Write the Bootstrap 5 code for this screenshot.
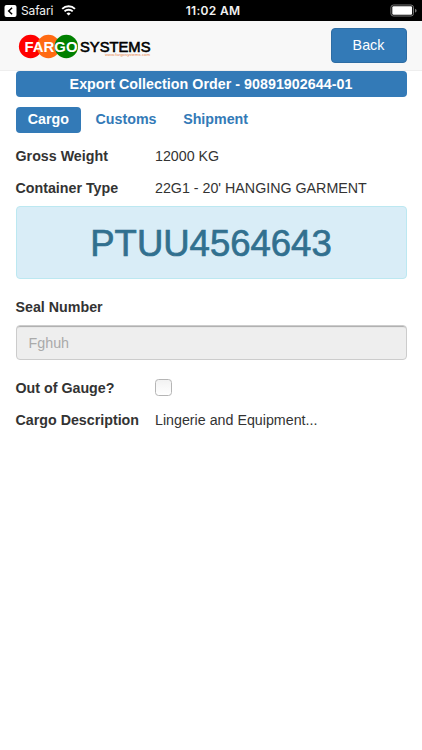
<!DOCTYPE html>
<html lang="en">
<head>
<meta charset="utf-8">
<meta name="viewport" content="width=device-width, initial-scale=1">
<title>Export Collection Order</title>
<link href="https://cdn.jsdelivr.net/npm/bootstrap@5.3.0/dist/css/bootstrap.min.css" rel="stylesheet">
<style>
:root{--brand:#337ab7}
body{font:14.25px/20px "Liberation Sans",Arial,sans-serif;color:#333;background:#fff}
.status-bar{height:21px;background:#000;color:#f2f2f2;font:12px/21px Inter,sans-serif}
.status-side{width:138px}
.status-time{font-weight:600;letter-spacing:.3px;padding-left:4px}
.top-nav{height:50px;background:#f8f8f8;padding:7px 15.5px 0 18px;border-bottom:1px solid #eee}
.btn-brand{width:76px;height:35px;padding:0;font-size:14.3px;color:#fff;background:var(--brand);border:1px solid #2e6da4;border-radius:4px}
.page-body{padding:0 15.5px}
.order-title{height:26px;line-height:26px;background:var(--brand);color:#fff;border-radius:4px;letter-spacing:.04px}
.tab-row{margin-top:10px;height:26px;gap:2px}
.tab-row .nav-link{height:26px;line-height:25px;padding:0 12.3px;color:var(--brand);border-radius:4px;font-weight:700;font-size:14.25px}
.tab-row .nav-link.active{background:var(--brand);color:#fff}
.field-row{height:32px;line-height:32px}
.field-name{width:139.5px;font-weight:700;white-space:nowrap}
.first-field{margin-top:7px}
.container-no{height:73px;margin:2px 0 0;padding:0;border:1px solid #bce8f1;border-radius:4px;background:#d9edf7;color:#31708f;font-size:36.5px;line-height:73px;-webkit-text-stroke:.7px #31708f}
.seal-label{margin:18px 0 8px;line-height:20px;font-weight:700}
.seal-input,.seal-input:disabled{height:35px;padding:0 12px;border:1px solid #ccc;border-radius:4px;background:#eee;color:#aaa;font-size:14.3px;box-shadow:inset 0 2px 1px -1px #aaa;opacity:1}
.gauge-row{margin-top:12px}
.gauge-box{display:block;width:17px;height:17px;margin:-2px 0 0;border:1px solid #b5b5b5;border-radius:4.5px;background:linear-gradient(#f2f2f2,#fff)}
.gauge-box:checked{background:var(--brand)}
</style>
<script src="https://cdn.jsdelivr.net/npm/bootstrap@5.3.0/dist/js/bootstrap.bundle.min.js"></script>
</head>
<body>
<div class="status-bar d-flex justify-content-between align-items-center">
  <div class="status-side d-flex align-items-center">
    <svg width="76" height="21" viewBox="0 0 76 21">
      <rect x="4.5" y="5" width="12" height="12" rx="2" fill="#fff"/>
      <path d="M12.1 7.8 8.7 11l3.4 3.2" fill="none" stroke="#000" stroke-width="1.5"/>
      <text x="21" y="15.3" fill="#f2f2f2" font-size="12" textLength="32.5" font-family="Inter,sans-serif">Safari</text>
      <g fill="none" stroke="#fff" stroke-width="1.9"><path d="M62.2 8.9a9.2 9.2 0 0 1 12.8 0"/><path d="M64.5 11.4a5.9 5.9 0 0 1 8.2 0"/></g>
      <path d="M66.5 13.5a3 3 0 0 1 4.2 0l-2.1 2.1z" fill="#fff"/>
    </svg>
  </div>
  <div class="status-time">11:02 AM</div>
  <div class="status-side d-flex justify-content-end">
    <svg width="34" height="21" viewBox="0 0 34 21">
      <rect x="2.9" y="5" width="22.6" height="11" rx="2.5" fill="none" stroke="#777" stroke-width="1"/>
      <rect x="4.3" y="6.3" width="19.8" height="8.5" rx="1.2" fill="#fff"/>
      <path d="M27 8.8q1.6.3 1.6 1.9T27 12.6z" fill="#777"/>
    </svg>
  </div>
</div>
<nav class="top-nav d-flex justify-content-between">
  <svg width="134" height="35" viewBox="18 28 134 35" role="img" aria-label="Fargo Systems">
    <circle cx="30.6" cy="46.5" r="11.7" fill="#f00"/>
    <circle cx="48.4" cy="46.5" r="11.7" fill="#ff6a13"/>
    <circle cx="66.3" cy="46.5" r="11.7" fill="#008000"/>
    <g font-family="Liberation Sans,Arial,sans-serif">
      <text x="24.5" y="51.7" font-size="15.2" font-weight="700" fill="#fff" textLength="53" lengthAdjust="spacingAndGlyphs">FARGO</text>
      <text x="80" y="51.5" font-size="15" fill="#000" stroke="#000" stroke-width=".6" textLength="70.5" lengthAdjust="spacingAndGlyphs">SYSTEMS</text>
      <text x="105" y="55.8" font-size="4" fill="#e8874f" textLength="45" lengthAdjust="spacingAndGlyphs">www.fargosystems.com</text>
    </g>
  </svg>
  <button class="btn btn-brand" type="button">Back</button>
</nav>
<main class="page-body">
  <div class="order-title text-center fw-bold">Export Collection Order - 90891902644-01</div>
  <ul class="nav nav-pills tab-row">
    <li class="nav-item"><a class="nav-link active" href="#">Cargo</a></li>
    <li class="nav-item"><a class="nav-link" href="#">Customs</a></li>
    <li class="nav-item"><a class="nav-link" href="#">Shipment</a></li>
  </ul>
  <div class="field-row first-field d-flex"><div class="field-name">Gross Weight</div><div>12000 KG</div></div>
  <div class="field-row d-flex"><div class="field-name">Container Type</div><div>22G1 - 20' HANGING GARMENT</div></div>
  <div class="alert container-no text-center">PTUU4564643</div>
  <label class="seal-label d-block" for="seal">Seal Number</label>
  <input class="form-control seal-input" id="seal" value="Fghuh" disabled>
  <div class="field-row gauge-row d-flex align-items-center"><label class="field-name" for="gauge">Out of Gauge?</label><input class="form-check-input gauge-box" id="gauge" type="checkbox"></div>
  <div class="field-row d-flex"><div class="field-name">Cargo Description</div><div>Lingerie and Equipment...</div></div>
</main>
</body>
</html>
